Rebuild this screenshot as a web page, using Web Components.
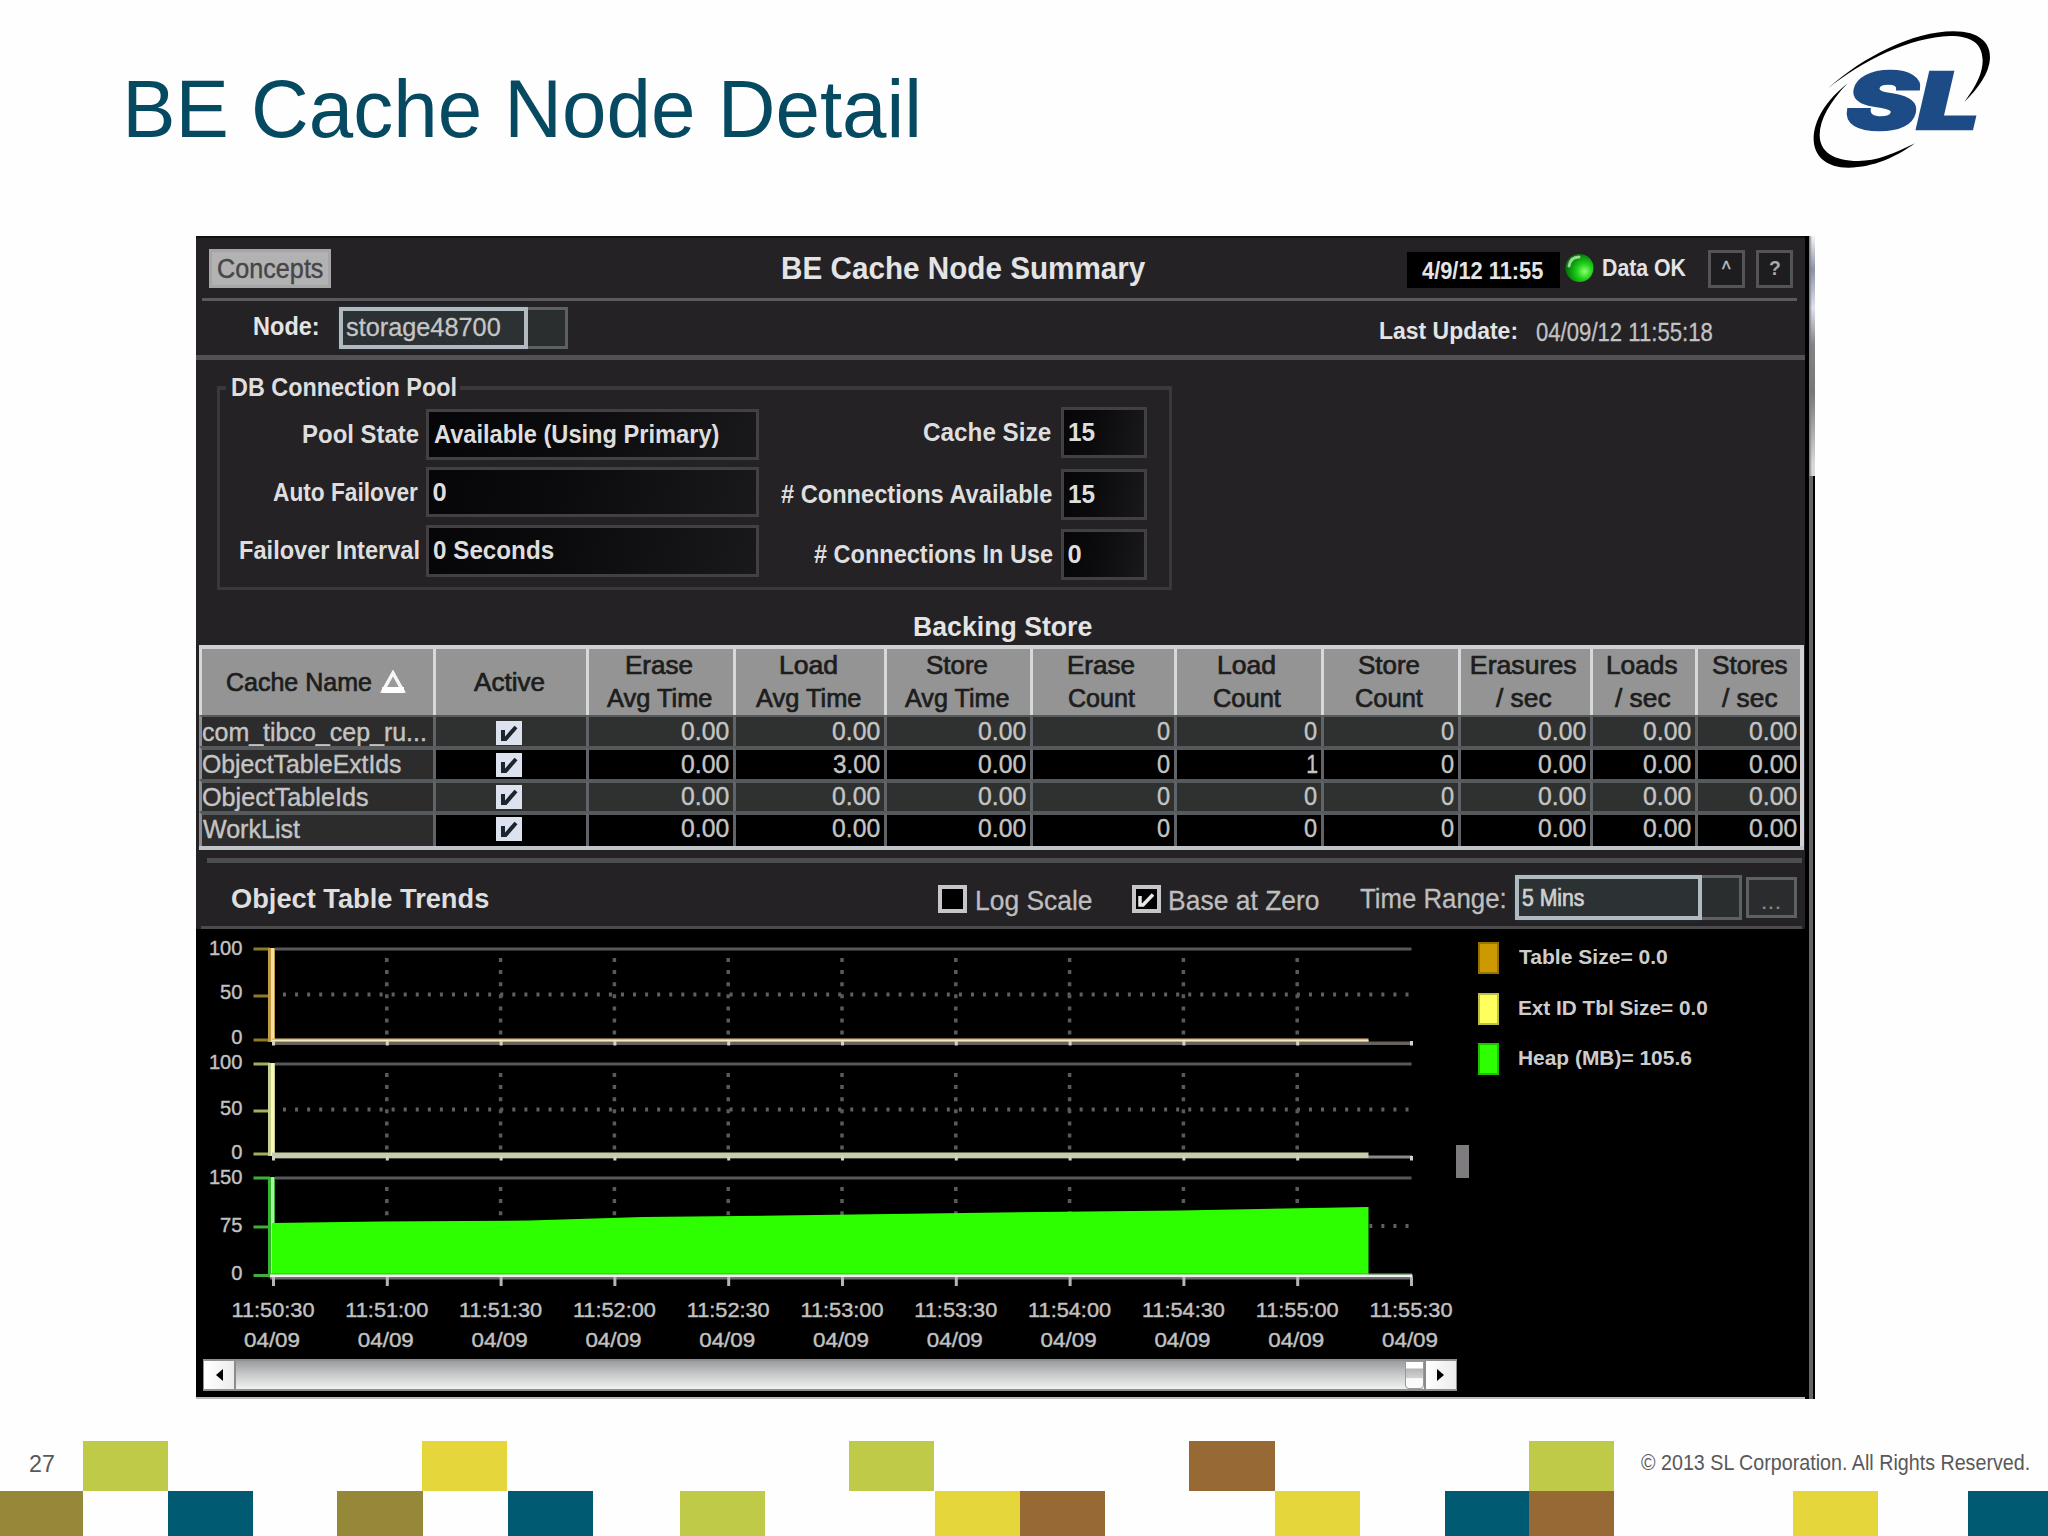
<!DOCTYPE html>
<html lang="en">
<head>
<meta charset="utf-8">
<title>BE Cache Node Detail</title>
<style>
  html, body { margin: 0; background: #fefefe; }
  body { width: 2048px; height: 1536px; overflow: hidden; font-family: "Liberation Sans", Arial, sans-serif; }
</style>
</head>
<body>
<slide-page></slide-page>
<script>
const measure = document.createElement('canvas').getContext('2d');

class Base extends HTMLElement {
  connectedCallback() {
    if (!this.shadowRoot) this.attachShadow({ mode: 'open' }).innerHTML = this.render();
  }
  a(n, d = '') { return this.getAttribute(n) ?? d; }
}

/* One line of text. s = font size, w = ink width, b = baseline below the row's top, g = gap to the left. */
customElements.define('ui-text', class extends Base {
  render() {
    const s = +this.a('s', 25), weight = this.a('weight', '400');
    measure.font = `${weight} ${s}px "Liberation Sans"`;
    const m = measure.measureText(this.textContent);
    const ink = m.actualBoundingBoxLeft + m.actualBoundingBoxRight;
    const w = +this.a('w', ink), k = w / ink;
    const mt = this.hasAttribute('b') ? +this.a('b') - 0.8465 * s : 0;
    return `<style>
      :host{display:block;flex:none;width:${w}px;height:${s}px;margin-top:${mt}px;margin-left:${this.a('g', 0)}px;
        font:${weight} ${s}px/1 "Liberation Sans",Arial,sans-serif;white-space:pre;color:${this.a('c', 'inherit')}}
      span{display:inline-block;transform-origin:0 0;transform:translateX(${m.actualBoundingBoxLeft * k}px) scaleX(${k});
        -webkit-text-stroke:${this.a('stroke', 0)}px currentColor}
    </style><span><slot></slot></span>`;
  }
});

customElements.define('sl-logo', class extends Base {
  render() {
    return `<style>:host{display:block;width:240px;height:180px}svg{display:block}</style>
    <svg width="240" height="180" viewBox="0 0 720 540">
      <path d="M143 236C250 140 400 64 520 64C600 64 632 100 630 145C628 190 595 235 553 276C590 225 608 190 608 150C606 100 575 78 510 78C390 82 250 150 143 236Z"/>
      <path d="M203 220C140 270 100 330 101 390C103 440 140 473 205 473C280 473 350 440 405 400C340 432 290 453 235 453C160 453 119 425 119 375C119 330 150 275 203 220Z"/>
      <g fill="#1c4b86" stroke="#1c4b86" stroke-width="7" font-family="Inter,'Liberation Sans',sans-serif" font-weight="900" font-style="italic" font-size="233">
        <text transform="translate(198 356) scale(1.4 1)">S</text>
        <text transform="translate(412 356) scale(1.42 1)">L</text>
      </g>
    </svg>`;
  }
});

customElements.define('value-field', class extends Base {
  render() {
    return `<style>:host{display:flex;align-items:flex-start;box-sizing:border-box;flex:none;border:3px solid #424043;
      background:linear-gradient(100deg,#060507,#0b0a0c 40%,#19181b)}</style>
      <slot></slot>`;
  }
});

customElements.define('field-row', class extends Base {
  render() {
    return `<style>
      :host{display:flex;height:${this.a('h')}px;margin-top:${this.a('top')}px;color:#dededf}
      .l{width:${this.a('lw')}px;display:flex;justify-content:flex-end;padding-right:${this.a('pad')}px;box-sizing:border-box}
      value-field{width:${this.a('fw')}px;height:100%}
    </style>
    <div class="l"><ui-text weight="700" s="25.5" b="35" w="${this.a('tw')}">${this.a('label')}</ui-text></div>
    <value-field><ui-text weight="700" s="25.5" b="32" g="4.5" w="${this.a('vw')}">${this.a('value')}</ui-text></value-field>`;
  }
});

customElements.define('pool-group', class extends Base {
  render() {
    return `<style>
      :host{display:block;box-sizing:border-box;width:955px;height:204px;margin:26px 0 0 21px;border:3px solid #3a383b;border-top-width:4px}
      .lg{display:flex;width:234px;height:26px;margin:-16px 0 0 6px;background:#242225;color:#dededf}
      .cols{display:flex}.a{width:539px}.b{width:388px}
    </style>
    <div class="lg"><ui-text weight="700" s="25.5" b="23" g="6" w="224">DB Connection Pool</ui-text></div>
    <div class="cols">
      <div class="a">
        <field-row h="51" top="9" lw="206" pad="7" fw="333" label="Pool State" tw="116" value="Available (Using Primary)" vw="285"></field-row>
        <field-row h="50" top="7" lw="206" pad="8" fw="333" label="Auto Failover" tw="145" value="0" vw="13"></field-row>
        <field-row h="52" top="8" lw="206" pad="7" fw="333" label="Failover Interval" tw="179" value="0 Seconds" vw="120"></field-row>
      </div>
      <div class="b">
        <field-row h="51" top="7" lw="302" pad="10" fw="86" label="Cache Size" tw="127" value="15" vw="26"></field-row>
        <field-row h="51" top="11" lw="302" pad="8" fw="86" label="# Connections Available" tw="272" value="15" vw="26"></field-row>
        <field-row h="51" top="9" lw="302" pad="8" fw="86" label="# Connections In Use" tw="239" value="0" vw="13"></field-row>
      </div>
    </div>`;
  }
});

customElements.define('status-lamp', class extends Base {
  render() {
    return `<style>:host{display:block;flex:none;width:29px;height:30px}svg{display:block}</style>
    <svg width="29" height="30" viewBox="0 0 29 30"><defs>
      <radialGradient id="g" cx=".68" cy=".62" r=".62"><stop offset="0" stop-color="#8dff6e"/><stop offset=".45" stop-color="#1fd01a"/><stop offset="1" stop-color="#067a08"/></radialGradient></defs>
      <circle cx="14.5" cy="15" r="14" fill="url(#g)"/>
      <path d="M4 13C5 7 9 4 14 4" stroke="#c9f5c0" stroke-width="3" fill="none" stroke-linecap="round" opacity=".75"/></svg>`;
  }
});

customElements.define('square-button', class extends Base {
  render() {
    return `<style>:host{display:flex;flex:none;justify-content:center;box-sizing:border-box;width:${this.a('w', 37)}px;height:${this.a('h', 38)}px;
      border:3px solid ${this.a('bc', '#545355')};background:${this.a('bg', '#1d1c1f')};color:#bdbdbd}</style><slot></slot>`;
  }
});

customElements.define('combo-box', class extends Base {
  render() {
    const w = +this.a('w'), h = +this.a('h'), t = +this.a('tail');
    return `<style>
      :host{display:flex;flex:none;width:${w + t}px;height:${h}px}
      .f{box-sizing:border-box;width:${w}px;border:4px solid #b2bac1;background:#2c3133;display:flex;box-shadow:0 0 4px #26343c}
      .t{box-sizing:border-box;width:${t}px;border:3px solid #5c6163;border-left:0;background:#2a2e2f}
    </style><div class="f"><slot></slot></div><div class="t"></div>`;
  }
});

customElements.define('check-box', class extends Base {
  render() {
    const on = this.hasAttribute('checked');
    return `<style>:host{display:block;flex:none;width:29px;height:28px}svg{display:block}</style>
    <svg width="29" height="28" viewBox="0 0 29 28"><rect x="2" y="2" width="25" height="24" fill="#000" stroke="#c6c6c8" stroke-width="4"/>
    ${on ? '<path d="M8 11V20H11L21 9.500" fill="none" stroke="#e8e8e8" stroke-width="3.500"/>' : ''}</svg>`;
  }
});

customElements.define('cache-table', class extends Base {
  render() {
    const edges = [199, 432.5, 586, 733, 884, 1030, 1173.5, 1321, 1457.5, 1589.5, 1695, 1804];
    const cols = edges.slice(1).map((e, i) => (e - edges[i]) + 'px').join(' ');
    const H = [[['Cache Name', 144]], [['Active', 70]], [['Erase', 65], ['Avg Time', 105]], [['Load', 56], ['Avg Time', 105]],
      [['Store', 60], ['Avg Time', 104]], [['Erase', 65], ['Count', 66]], [['Load', 56], ['Count', 67]], [['Store', 60], ['Count', 67]],
      [['Erasures', 104], ['/ sec', 55]], [['Loads', 69], ['/ sec', 55]], [['Stores', 74], ['/ sec', 55]]];
    const rows = [
      ['com_tibco_cep_ru...', 222, '0.00', '0.00', '0.00', '0', '0', '0', '0.00', '0.00', '0.00'],
      ['ObjectTableExtIds', 198, '0.00', '3.00', '0.00', '0', '1', '0', '0.00', '0.00', '0.00'],
      ['ObjectTableIds', 165, '0.00', '0.00', '0.00', '0', '0', '0', '0.00', '0.00', '0.00'],
      ['WorkList', 97, '0.00', '0.00', '0.00', '0', '0', '0', '0.00', '0.00', '0.00']];
    const tri = '<svg width="26" height="24" viewBox="0 0 26 24"><path d="M13 3L23 21H3Z" fill="#9a9a9a" stroke="#f6f6f6" stroke-width="3.500"/><path d="M2 20H24" stroke="#fff" stroke-width="6"/></svg>';
    const tick = '<svg width="26" height="24" viewBox="0 0 26 24"><rect width="26" height="24" fill="#dce3ee"/><path d="M7 9V18H9.500L20 6" fill="none" stroke="#1b2430" stroke-width="4"/></svg>';
    const head = H.map((c, i) => `<div class="h">${i ? '' : '<div class="r">'}${c.map(([t, w]) =>
      `<ui-text s="25" stroke=".7" w="${w}">${t}</ui-text>`).join('')}${i ? '' : tri + '</div>'}</div>`).join('');
    const base = [24, 23.5, 22.7, 22.7], tops = [4, 3, 2, 2];
    const body = rows.map((r, n) => {
      const k = (n % 2 ? 'odd' : '') + (n ? '' : ' first'), b = base[n];
      return `<div class="c n ${n ? '' : 'first'}"><ui-text s="25" b="${b}" g="1" w="${r[1]}" stroke=".4">${r[0]}</ui-text></div>` +
        `<div class="c k ${k}" style="padding-top:${tops[n]}px">${tick}</div>` +
        r.slice(2).map((v, i) => `<div class="c v ${k}"${i === 8 ? ' style="padding-right:7px"' : ''}><ui-text s="25.5" b="${b}" stroke=".4" w="${v === '1' ? 10 : v === '0' ? 12 : 47}">${v}</ui-text></div>`).join('');
    }).join('');
    return `<style>
      :host{display:grid;grid-template-columns:${cols};grid-template-rows:66px 31px 33px 32px 35px;box-sizing:border-box;
        width:1605px;height:205px;margin-left:3px;border-top:4px solid #ced0d2;border-bottom:4px solid #bfc3ca;position:relative}
      :host::after{content:"";position:absolute;right:0;top:0;bottom:0;width:4px;background:#d0d2d6}
      .h{background:#949494;border-left:3px solid #d6d8da;box-sizing:border-box;display:flex;flex-direction:column;align-items:center;justify-content:center;gap:7.700px;color:#1d1d1d}
      .h:not(:first-child){padding-right:3px}
      .r{display:flex;gap:9px;align-items:center;padding-left:1px}
      .c{box-sizing:border-box;border-left:3px solid #606468;border-top:4px solid #565a5c;background:#2f3131;color:#c4c4c4;display:flex;align-items:flex-start;overflow:hidden}
      .n{background:#2c2c2d;border-left-color:#8b8f94}
      .first{border-top-width:2px}
      .odd{background:#000}
      .k{justify-content:center;padding-right:4px}.v{justify-content:flex-end;padding-right:4px}
    </style>${head}${body}`;
  }
});

customElements.define('trend-chart', class extends Base {
  render() {
    const x0 = 273.5, step = 113.8, x1 = 1411.5;
    const T = (t, x, y, w, anchor) => `<text x="${x}" y="${y}" text-anchor="${anchor}" textLength="${w}" lengthAdjust="spacingAndGlyphs">${t}</text>`;
    const P = [
      { top: 949, mid: 996, base: 1040, dot: 994.5, l: [['100', 954.5], ['50', 999], ['0', 1044]], c: '#c09a45', hi: '#f3dfa2', tk: '#8a7a2a' },
      { top: 1064, mid: 1111, base: 1154, dot: 1109.5, l: [['100', 1069], ['50', 1115], ['0', 1159]], c: '#c9cf8e', hi: '#f8f8b8', tk: '#a5ad5e' },
      { top: 1178, mid: 1227, base: 1275.5, dot: 1226, l: [['150', 1183.5], ['75', 1232], ['0', 1280]], c: '#35b52f', hi: '#a5f2a0', tk: '#3fae3a' }];
    let s = '';
    for (const p of P) {
      s += `<rect x="275" y="${p.top - 1.5}" width="1136.500" height="3" fill="#58575a"/>`;
      s += `<path d="M283 ${p.dot}H${x1}" stroke="#605f61" stroke-width="4" stroke-dasharray="3 9.070"/>`;
      for (let i = 1; i < 10; i++) s += `<path d="M${x0 + i * step - .5} ${p.top + 9}V${p.base - 2}" stroke="#5a595b" stroke-width="3.500" stroke-dasharray="4 8.100"/>`;
      for (const y of [p.top, p.mid, p.base]) s += `<path d="M253.500 ${y}H270" stroke="${p.tk}" stroke-width="3"/>`;
      s += `<rect x="268" y="${p.top - 1}" width="7" height="${p.base - p.top + 3}" fill="${p.c}"/><rect x="271" y="${p.top - 1}" width="3" height="${p.base - p.top + 3}" fill="${p.hi}"/>`;
      p.l.forEach(([t, y]) => { s += T(t, 242.5, y, t.length * 11.2, 'end'); });
    }
    s += `<rect x="272" y="1041.500" width="1140" height="3.500" fill="#67625d"/><rect x="272" y="1038.500" width="1096.500" height="3" fill="#e0bd72"/><rect x="272" y="1040" width="1096.500" height="1.500" fill="#f6e7bd"/>`;
    s += `<rect x="272" y="1155.500" width="1140" height="3" fill="#8a8a88"/><rect x="272" y="1152.500" width="1096.500" height="5.500" fill="#c8ccab"/>`;
    for (let i = 0; i <= 10; i++) for (const y of [1040, 1155]) s += `<rect x="${x0 + i * step - 1.5}" y="${y + 1}" width="3" height="4.500" fill="#d4d2c6"/>`;
    s += `<path d="M272 1223L380 1221.500L529 1220.500L643 1217L780 1215.500L1000 1212.500L1180 1210.500L1368.500 1207V1275H272Z" fill="#2eff00"/>`;
    s += `<rect x="268" y="1273" width="1144" height="2" fill="#3fae3a" opacity=".6"/><rect x="270" y="1274.500" width="1142.500" height="3" fill="#f2f2f2"/><rect x="270" y="1277.500" width="1142.500" height="2" fill="#6b6b6b"/>`;
    for (let i = 0; i <= 10; i++) {
      const x = x0 + i * step, t = 11 * 3600 + 50 * 60 + 30 + i * 30;
      const lab = `11:${Math.floor(t / 60) % 60}:${t % 60 ? '30' : '00'}`;
      s += `<rect x="${x - 1.5}" y="1277" width="3" height="9" fill="#b5b5b5"/>`;
      s += T(lab, x - .5, 1317, 83, 'middle') + T('04/09', x - 1.5, 1347, 56, 'middle');
    }
    return `<style>:host{display:block}svg{display:block}text{font:20.500px "Liberation Sans",Arial,sans-serif;fill:#c2c2c2;stroke:#c2c2c2;stroke-width:.4}</style>
      <svg width="1260" height="430" viewBox="196 929 1260 430">${s}</svg>`;
  }
});

customElements.define('scroll-strip', class extends Base {
  render() {
    return `<style>
      :host{display:flex;box-sizing:border-box;width:1254px;height:32px;margin-left:7px;border:2px solid #8e9092;border-width:2px 1px;background:linear-gradient(#9b9d9f,#c4c6c7 45%,#f1f1f1)}
      .b{width:30px;background:linear-gradient(90deg,#fff,#ececec);display:flex;align-items:center;justify-content:center}
      .s{flex:1;display:flex;justify-content:flex-end;border-left:2px solid #8a8c8e;border-right:2px solid #8a8c8e}
      .t{width:19px;box-sizing:border-box;border:1px solid #999;background:linear-gradient(#fff 0 24%,#b5b5b7 26%,#d0d0d2 60%,#fafafa 64%);border-radius:0 0 4px 4px}
    </style>
    <div class="b"><svg width="10" height="12"><path d="M9 0V12L2 6Z"/></svg></div><div class="s"><div class="t"></div></div>
    <div class="b"><svg width="10" height="12"><path d="M1 0V12L8 6Z"/></svg></div>`;
  }
});

customElements.define('legend-item', class extends Base {
  render() {
    return `<style>:host{display:flex;height:${this.a('h', 51)}px;color:#cdcdcd}i{width:21px;height:32px;background:${this.a('color')};box-sizing:border-box;border:2px solid rgba(0,0,0,.25)}</style>
      <i></i><ui-text weight="700" s="19.500" b="23" g="20" w="${this.a('w')}">${this.a('label')}</ui-text>`;
  }
});

customElements.define('monitor-panel', class extends Base {
  render() {
    return `<style>
      :host{display:flex;width:1619px;height:1163px;background:#000}
      .m{width:1609px;display:flex;flex-direction:column;background:#242225;color:#e4e4e5}
      .row{display:flex;align-items:flex-start}
      .ln{flex:none}
      .edge{width:10px;display:flex;flex-direction:column}
      .e1{height:240px;margin-left:4px;background:linear-gradient(90deg,#77777c,transparent 50%),linear-gradient(#f4f4f6,#8b93a8 14%,#dfe2ee 30%,#858589 45%,#777 65%,#d8d8da 95%)}
      .e2{flex:1;margin-left:4px;width:4px;background:#656467}
      .stamp{width:153px;height:36px;background:#000;display:flex}
      .black{background:#000;height:468px;display:flex}
      .leg{margin-left:9px;padding-top:13px}
      .split{width:13px;height:33px;background:#7e7c7e;margin:216px 0 0 -1px}
    </style>
    <div class="m">
      <div class="row" style="height:62px;border-top:2px solid #111;box-sizing:border-box">
        <square-button w="122" h="39" bc="#a6a5a7" bg="#b3b2b3" style="margin:11px 0 0 13px;color:#4c4b4d"><ui-text s="27" b="27" w="105" stroke=".4" c="#464547">Concepts</ui-text></square-button>
        <ui-text weight="700" s="31" b="41.500" g="452" w="363">BE Cache Node Summary</ui-text>
        <div class="stamp" style="margin:14px 0 0 261px"><ui-text weight="700" s="24" b="27" g="15" w="121">4/9/12 11:55</ui-text></div>
        <status-lamp style="margin:15px 0 0 5px"></status-lamp>
        <ui-text weight="700" s="23.500" b="39" g="9" w="83">Data OK</ui-text>
        <square-button style="margin:12px 0 0 22px"><ui-text s="22" b="24" w="9" stroke=".5">^</ui-text></square-button>
        <square-button style="margin:12px 0 0 11px"><ui-text s="21" b="22" w="11" weight="700" c="#a9a9aa">?</ui-text></square-button>
      </div>
      <div class="ln" style="height:3px;width:1595px;margin-left:6px;background:#5a595c"></div>
      <div class="row" style="height:54px">
        <ui-text weight="700" s="26.500" b="34" g="58" w="64">Node:</ui-text>
        <combo-box w="189" h="42" tail="40" style="margin:6px 0 0 21px"><ui-text s="26.500" b="25.500" g="3" w="154" c="#c6c6c6" stroke=".3">storage48700</ui-text></combo-box>
        <ui-text weight="700" s="24.500" b="38.500" g="812" w="136">Last Update:</ui-text>
        <ui-text s="25" b="40" g="20" w="176" c="#c2c2c3" stroke=".3">04/09/12 11:55:18</ui-text>
      </div>
      <div class="ln" style="height:5px;background:#525154"></div>
      <pool-group></pool-group>
      <div class="row" style="height:55px"><ui-text weight="700" s="27.500" b="46" g="718" w="178">Backing Store</ui-text></div>
      <cache-table></cache-table>
      <div class="ln" style="height:5px;margin:8px 3px 1px 11px;background:#4d4c4e"></div>
      <div class="row" style="height:62px;color:#bebebf">
        <ui-text weight="700" s="27.500" b="44" g="36" w="257" c="#dededf">Object Table Trends</ui-text>
        <check-box style="margin:21px 0 0 449px"></check-box>
        <ui-text s="28" b="47" g="10" w="115" stroke=".3">Log Scale</ui-text>
        <check-box checked style="margin:21px 0 0 40px"></check-box>
        <ui-text s="28" b="47" g="9" w="149" stroke=".3">Base at Zero</ui-text>
        <ui-text s="28" b="45" g="41" w="145" stroke=".3">Time Range:</ui-text>
        <combo-box w="187" h="45" tail="40" style="margin:11px 0 0 10px"><ui-text s="23" b="27" g="3" w="62" stroke=".7" c="#cfcfcf">5 Mins</ui-text></combo-box>
        <square-button w="51" h="41" bc="#5c6163" bg="#2a2c2d" style="margin:13px 0 0 4px"><ui-text s="22" b="30" w="17" c="#8c8c8c">...</ui-text></square-button>
      </div>
      <div class="ln" style="height:3px;background:#4b4a4c;margin:0 3px 0 5px"></div>
      <div class="black">
        <div><trend-chart></trend-chart><scroll-strip></scroll-strip></div>
        <div class="split"></div>
        <div class="leg">
          <legend-item color="#cc9a00" label="Table Size= 0.0" w="149"></legend-item>
          <legend-item color="#ffff5e" label="Ext ID Tbl Size= 0.0" w="189" h="50"></legend-item>
          <legend-item color="#2eff00" label="Heap (MB)= 105.6" w="173"></legend-item>
        </div>
      </div>
      <div class="ln" style="height:2px;background:#bdbbbe"></div>
    </div>
    <div class="edge"><div class="e1"></div><div class="e2"></div></div>`;
  }
});

customElements.define('tile-footer', class extends Base {
  render() {
    const L = '#bfca48', Y = '#e5d63c', O = '#958838', B = '#976934', Z = '#005b72';
    const band = (list, h) => {
      let x = 0;
      return list.map(([a, b, c]) => { const g = a - x; x = b; return `<i style="margin-left:${g}px;width:${b - a}px;height:${h}px;background:${c}"></i>`; }).join('');
    };
    return `<style>
      :host{display:block;width:2048px;height:95px;color:#58585a}
      div{display:flex;align-items:flex-start}i{flex:none;display:block}
    </style>
    <div style="height:49.500px"><ui-text s="23" b="31" g="30" w="24">27</ui-text><span style="width:28.500px"></span>${
      band([[0, 85.3, L], [340, 425, Y], [766.7, 852, L], [1106.7, 1192.5, B], [1446.5, 1531.5, L]], 49.5)
    }<ui-text s="22" b="30" g="27" w="390">© 2013 SL Corporation. All Rights Reserved.</ui-text></div>
    <div>${band([[0, 82.5, O], [167.5, 252.5, Z], [337, 422.5, O], [507.5, 593, Z], [679.5, 764.5, L], [934.5, 1020, Y], [1020, 1104.5, B],
      [1275, 1359.5, Y], [1444.5, 1529, Z], [1529, 1614, B], [1792.5, 1878, Y], [1967.5, 2048, Z]], 45.5)}</div>`;
  }
});

customElements.define('slide-page', class extends Base {
  render() {
    return `<style>
      :host{display:flex;flex-direction:column;width:2048px;height:1536px}
      header{display:flex;height:236px;align-items:flex-start}
      sl-logo{margin:10px 0 0 863px}
      monitor-panel{margin-left:196px;flex:none}
      tile-footer{margin-top:42px;flex:none}
    </style>
    <header><ui-text s="82" b="137" g="128" w="789" c="#054a61">BE Cache Node Detail</ui-text><sl-logo></sl-logo></header>
    <monitor-panel></monitor-panel>
    <tile-footer></tile-footer>`;
  }
});
</script>
</body>
</html>
